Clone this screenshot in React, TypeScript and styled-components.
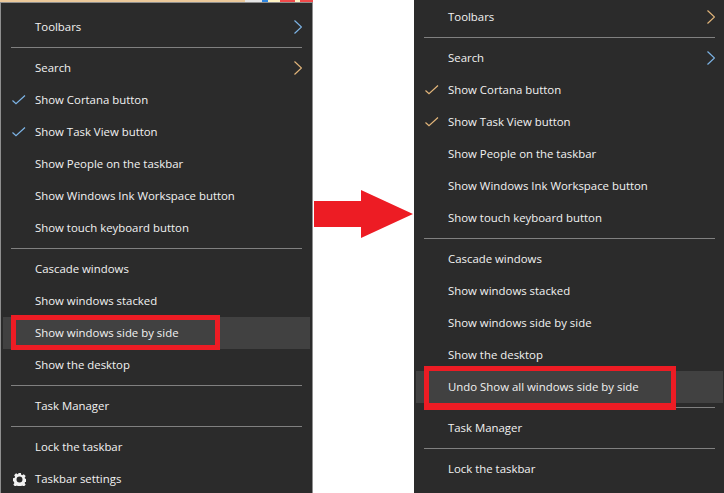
import styled, { createGlobalStyle } from 'styled-components';

const GlobalStyle = createGlobalStyle`
  html, body {
    margin: 0;
    padding: 0;
    background: #fff;
  }
`;

const Page = styled.div`
  display: flex;
  width: 724px;
  height: 493px;
  overflow: hidden;
  background: #fff;
  font-family: 'Open Sans', 'Noto Sans', sans-serif;
`;

const LeftColumn = styled.div`
  flex: 0 0 313px;
  display: flex;
  flex-direction: column;
`;

const TopStrip = styled.div`
  flex: 0 0 2px;
  background: linear-gradient(
    to right,
    #ecc99b 0 245px,
    #e6e6e6 245px 262px,
    #2f86e0 262px 268px,
    #fff3c4 268px 280px,
    #f04a4a 280px 295px,
    #fff3c4 295px 300px,
    #f04a4a 300px 313px
  );
`;

const Menu = styled.div<{ $top: number; $edge?: boolean }>`
  flex: 1;
  box-sizing: border-box;
  padding-top: ${(props) => props.$top}px;
  background: #2b2b2b;
  border: ${(props) => (props.$edge ? '1px solid #8f8f8f' : 'none')};
  border-bottom: none;
`;

const ArrowGap = styled.div`
  flex: 0 0 101px;
  box-sizing: border-box;
  padding: 190px 0 0 1px;
`;

const RightColumn = styled.div`
  flex: 0 0 311px;
  display: flex;
  flex-direction: column;
`;

const Row = styled.div<{ $active?: boolean }>`
  position: relative;
  height: 32px;
  box-sizing: border-box;
  display: flex;
  align-items: center;
  margin: 0 2px;
  padding: 0 8px 1px 32px;
  background: ${(props) => (props.$active ? '#414141' : 'transparent')};
  color: #f2f2f2;
  font-size: 11.4px;
  white-space: nowrap;
`;

const Divider = styled.div`
  height: 1px;
  margin: 4px 10px;
  background: #808080;
`;

const CheckIcon = styled.svg`
  position: absolute;
  left: 9px;
  top: 9px;
`;

const GearIcon = styled.svg`
  position: absolute;
  left: 10px;
  top: 10px;
`;

const Chevron = styled.svg`
  margin-left: auto;
`;

const RedBox = styled.div<{ $width: number; $top: number; $height: number; $bottom: number }>`
  position: absolute;
  box-sizing: border-box;
  left: 8px;
  width: ${(props) => props.$width}px;
  top: ${(props) => props.$top}px;
  height: ${(props) => props.$height}px;
  border: 5px solid #ed1c24;
  border-bottom-width: ${(props) => props.$bottom}px;
`;

type Box = { width: number; top: number; height: number; bottom: number };
type Item = {
  label?: string;
  check?: boolean;
  gear?: boolean;
  chevron?: string;
  box?: Box;
};

const BLUE = '#7db4e6';
const ORANGE = '#e2b57a';

const leftItems: Item[] = [
  { label: 'Toolbars', chevron: BLUE },
  {},
  { label: 'Search', chevron: ORANGE },
  { label: 'Show Cortana button', check: true },
  { label: 'Show Task View button', check: true },
  { label: 'Show People on the taskbar' },
  { label: 'Show Windows Ink Workspace button' },
  { label: 'Show touch keyboard button' },
  {},
  { label: 'Cascade windows' },
  { label: 'Show windows stacked' },
  { label: 'Show windows side by side', box: { width: 209, top: -2, height: 35, bottom: 5 } },
  { label: 'Show the desktop' },
  {},
  { label: 'Task Manager' },
  {},
  { label: 'Lock the taskbar' },
  { label: 'Taskbar settings', gear: true },
];

const rightItems: Item[] = [
  { label: 'Toolbars', chevron: ORANGE },
  {},
  { label: 'Search', chevron: BLUE },
  { label: 'Show Cortana button', check: true },
  { label: 'Show Task View button', check: true },
  { label: 'Show People on the taskbar' },
  { label: 'Show Windows Ink Workspace button' },
  { label: 'Show touch keyboard button' },
  {},
  { label: 'Cascade windows' },
  { label: 'Show windows stacked' },
  { label: 'Show windows side by side' },
  { label: 'Show the desktop' },
  { label: 'Undo Show all windows side by side', box: { width: 252, top: -5, height: 44, bottom: 7 } },
  {},
  { label: 'Task Manager' },
  {},
  { label: 'Lock the taskbar' },
];

function ContextMenu({ items, top, edge, tint }: { items: Item[]; top: number; edge?: boolean; tint: string }) {
  return (
    <Menu $top={top} $edge={edge}>
      {items.map((item, i) =>
        item.label ? (
          <Row key={i} $active={!!item.box}>
            {item.check && (
              <CheckIcon width="14" height="14" viewBox="0 0 14 14" fill="none" stroke={tint} strokeWidth="1.2">
                <path d="M0.500 7.500 L4 10.800 L13 2.500" />
              </CheckIcon>
            )}
            {item.gear && (
              <GearIcon width="13" height="13" viewBox="0 0 24 24" fill="#f2f2f2">
                <path
                  fillRule="evenodd"
                  d="M9.500 0h5l.7 3.300 1.800.8 2.900-1.900 3.500 3.500-1.900 2.900.8 1.800 3.200.7v5l-3.200.7-.8 1.800 1.900 2.900-3.500 3.500-2.900-1.900-1.800.8-.7 3.300h-5l-.7-3.300-1.800-.8-2.900 1.900-3.500-3.500 1.900-2.900-.8-1.800L0 14.500v-5l3.200-.7.8-1.800-1.900-2.900 3.500-3.500 2.900 1.900 1.800-.8z M12 6.500a5.500 5.500 0 1 0 0 11 5.500 5.500 0 0 0 0-11z"
                />
              </GearIcon>
            )}
            {item.label}
            {item.chevron && (
              <Chevron width="8" height="14" viewBox="0 0 8 14" fill="none" stroke={item.chevron} strokeWidth="1.2">
                <path d="M0.500 0.500 L7.500 7 L0.500 13.500" />
              </Chevron>
            )}
            {item.box && (
              <RedBox $width={item.box.width} $top={item.box.top} $height={item.box.height} $bottom={item.box.bottom} />
            )}
          </Row>
        ) : (
          <Divider key={i} />
        )
      )}
    </Menu>
  );
}

export default function App() {
  return (
    <Page>
      <GlobalStyle />
      <LeftColumn>
        <TopStrip />
        <ContextMenu items={leftItems} top={8} edge tint={BLUE} />
      </LeftColumn>
      <ArrowGap>
        <svg width="99" height="48" viewBox="0 0 99 48">
          <path d="M0 11 H47 V0 L99 24 L47 48 V37 H0 Z" fill="#ed1c24" />
        </svg>
      </ArrowGap>
      <RightColumn>
        <ContextMenu items={rightItems} top={1} tint={ORANGE} />
      </RightColumn>
    </Page>
  );
}
